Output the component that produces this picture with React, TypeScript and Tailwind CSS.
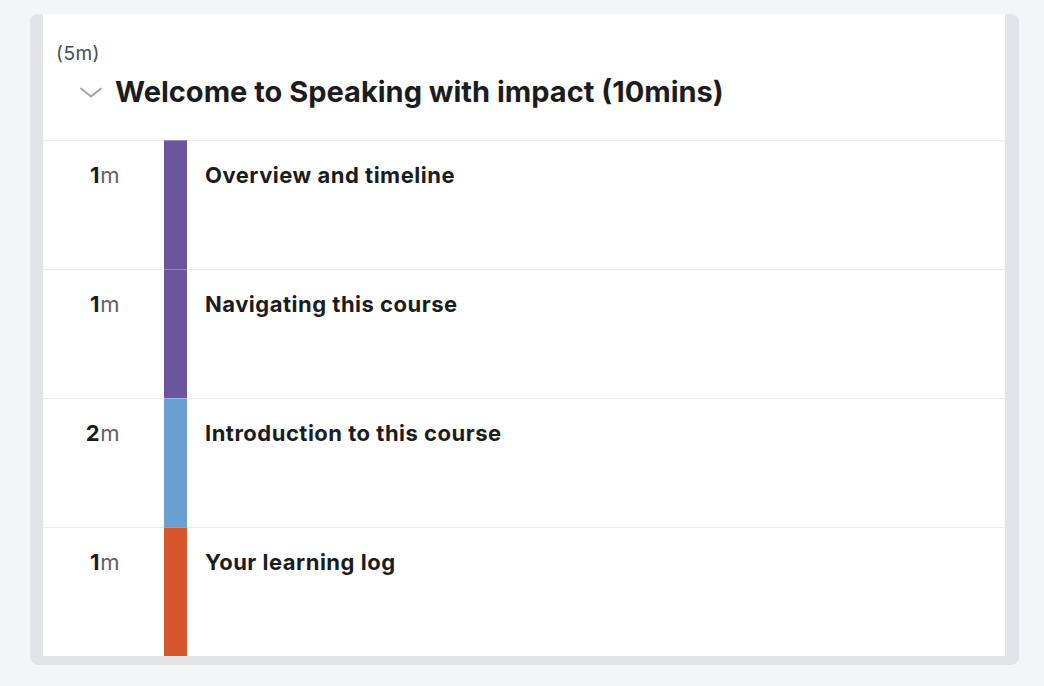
type Lesson = { minutes: number; title: string; color: string };

const lessons: Lesson[] = [
  { minutes: 1, title: "Overview and timeline", color: "bg-[#6b569e]" },
  { minutes: 1, title: "Navigating this course", color: "bg-[#6b569e]" },
  { minutes: 2, title: "Introduction to this course", color: "bg-[#6a9fd4]" },
  { minutes: 1, title: "Your learning log", color: "bg-[#d6572e]" },
];

function LessonRow({ lesson }: { lesson: Lesson }) {
  return (
    <div className="flex h-[129px] border-t border-[#ececef]">
      <div className="w-[77px] shrink-0 pt-[21px] text-right text-[22px] leading-[26px] tracking-[0.6px]">
        <span className="font-bold text-[#1c1c1f]">{lesson.minutes}</span>
        <span className="text-[#5f6066]">m</span>
      </div>
      <div className={`-mt-px ml-[44px] w-[23px] shrink-0 border-t border-white/30 ${lesson.color}`} />
      <div className="pl-[18px] pt-[21px] text-[22px] font-bold leading-[26px] tracking-[0.5px] text-[#1c1c1f]">
        {lesson.title}
      </div>
    </div>
  );
}

export default function App() {
  return (
    <div
      className="min-h-[686px] bg-[#f4f5f7] pl-[30px] pr-[25px] pt-[14px]"
      style={{ fontFamily: "Inter, 'Noto Sans', sans-serif" }}
    >
      <div className="w-[989px] rounded-lg bg-[#e3e4e8] pb-[9px] pl-[13px] pr-[14px]">
        <div className="bg-white">
          <header className="h-[126px] pl-[13px] pt-[28px]">
            <div className="text-[19px] leading-6 tracking-[0.5px] text-[#4a4b50]">(5m)</div>
            <div className="mt-[8px] flex h-[36px] items-center">
              <svg width="22" height="11" viewBox="0 0 22 11" className="ml-[24px]" fill="none">
                <polyline
                  points="1,1.5 11,9.5 21,1.5"
                  stroke="#a0a1a7"
                  strokeWidth="1.8"
                  strokeLinecap="round"
                  strokeLinejoin="round"
                />
              </svg>
              <h1 className="ml-[13px] text-[29px] font-bold leading-[36px] text-[#1c1c1f]">
                Welcome to Speaking with impact (10mins)
              </h1>
            </div>
          </header>
          {lessons.map((lesson, i) => (
            <LessonRow key={i} lesson={lesson} />
          ))}
        </div>
      </div>
    </div>
  );
}
